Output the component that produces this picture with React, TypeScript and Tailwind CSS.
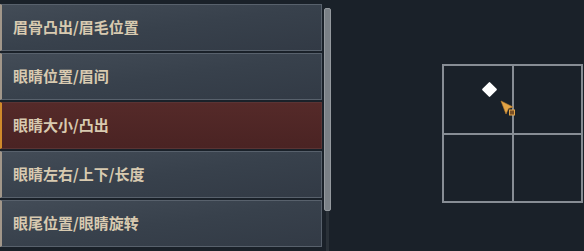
const items = [
  "眉骨凸出/眉毛位置",
  "眼睛位置/眉间",
  "眼睛大小/凸出",
  "眼睛左右/上下/长度",
  "眼尾位置/眼睛旋转",
];

const selected = 2;

export default function App() {
  return (
    <div
      className="flex w-[584px] h-[251px] overflow-hidden bg-[#1a2129]"
      style={{ fontFamily: '"Noto Sans CJK SC", "Noto Sans", sans-serif' }}
    >
      {/* list */}
      <div className="flex flex-col gap-[2px] pt-[4px] w-[322px] shrink-0">
        {items.map((label, i) => {
          const active = i === selected;
          return (
            <div
              key={label}
              className={
                active
                  ? "relative h-[47px] flex items-center pl-[11px] border border-[#5a3434] border-l-[2px] border-l-[#d08a2a] bg-gradient-to-b from-[#552a29] to-[#4a2323]"
                  : "relative h-[47px] flex items-center pl-[11px] border border-[#58616c] border-l-[2px] border-l-[#a2978a] bg-gradient-to-br from-[#434c57] via-[#38414c] to-[#323a45]"
              }
            >
              <span className="text-[15px] font-bold text-[#d8cab0]">
                {label}
              </span>
            </div>
          );
        })}
      </div>

      {/* scrollbar */}
      <div className="ml-[2px] w-[7px] shrink-0 flex flex-col pt-[8px]">
        <div className="h-[203px] rounded-[2px] bg-[#7a8086] border border-[#94999e]" />
        <div className="flex-1 mx-[2px] bg-[#2a3138]" />
      </div>

      {/* grid pad */}
      <div className="flex-1 pl-[111px] pt-[64px]">
        <div className="relative w-[141px] h-[139px] grid grid-cols-2 grid-rows-2 gap-[2px] p-[2px] bg-[#878d94]">
          <div className="bg-[#1a2129]" />
          <div className="bg-[#1a2129]" />
          <div className="bg-[#1a2129]" />
          <div className="bg-[#1a2129]" />

          {/* handle */}
          <div className="absolute left-[42px] top-[20px] w-[11px] h-[11px] rotate-45 rounded-[1px] bg-white" />

          {/* cursor */}
          <svg
            className="absolute left-[58px] top-[36px]"
            width="18"
            height="18"
            viewBox="0 0 18 18"
          >
            <path d="M1 1 L13 7 L8.5 8.5 L6 14 Z" fill="#e2a446" stroke="#c0802e" strokeWidth="0.6" strokeLinejoin="round" />
            <rect x="9.5" y="10" width="5" height="5" fill="#7a5026" stroke="#e2a446" strokeWidth="1" />
          </svg>
        </div>
      </div>
    </div>
  );
}
